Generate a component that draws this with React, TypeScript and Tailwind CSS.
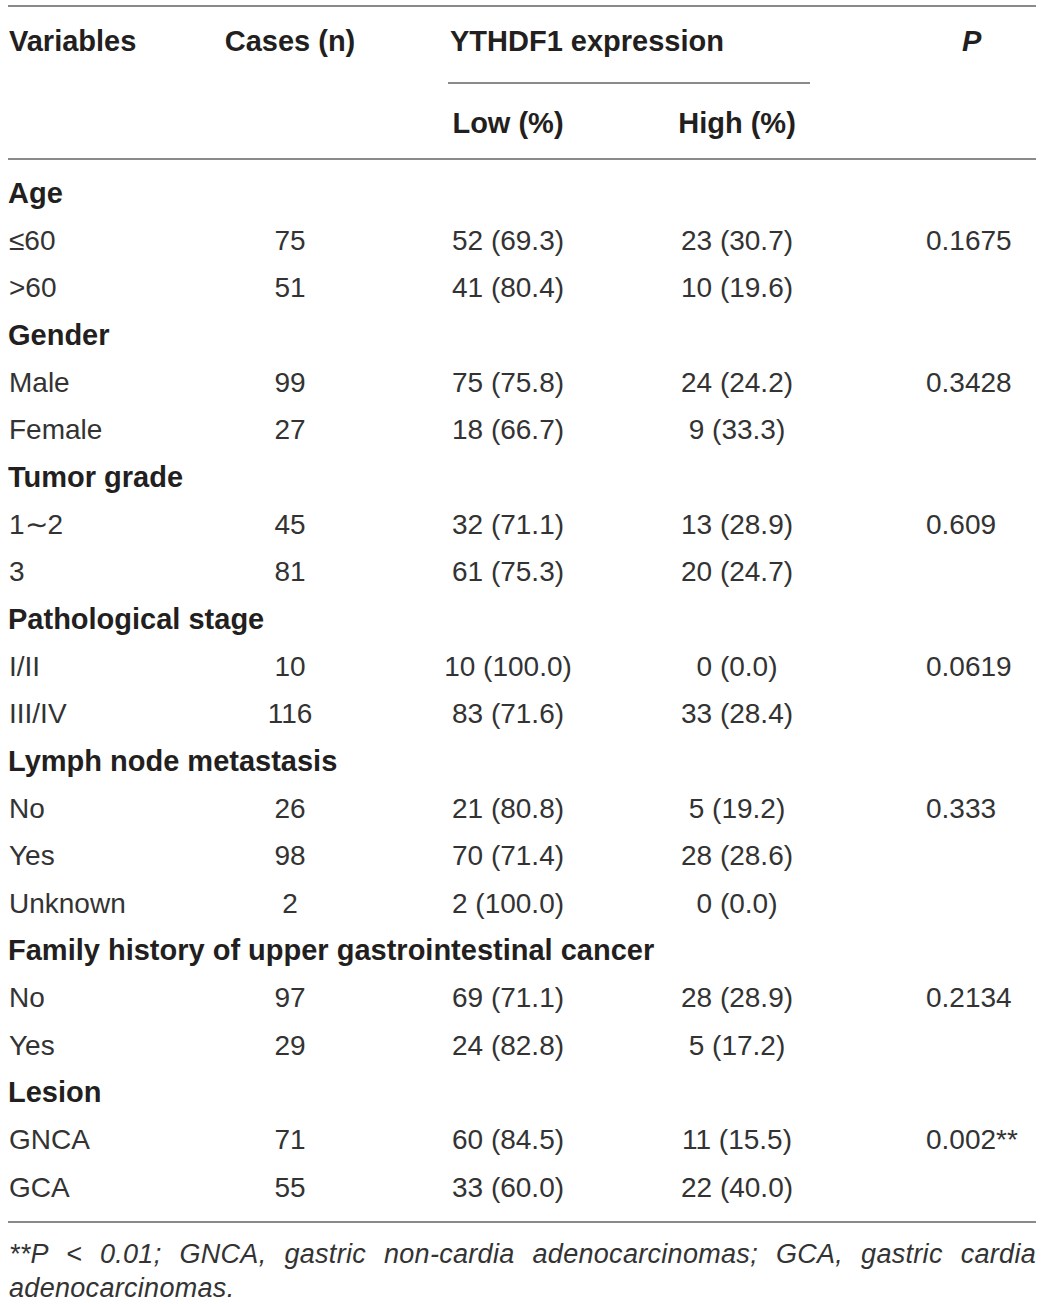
const rows: { section?: string; cells?: [string, string, string, string, string] }[] = [
  { section: 'Age' },
  { cells: ['≤60', '75', '52 (69.3)', '23 (30.7)', '0.1675'] },
  { cells: ['>60', '51', '41 (80.4)', '10 (19.6)', ''] },
  { section: 'Gender' },
  { cells: ['Male', '99', '75 (75.8)', '24 (24.2)', '0.3428'] },
  { cells: ['Female', '27', '18 (66.7)', '9 (33.3)', ''] },
  { section: 'Tumor grade' },
  { cells: ['1∼2', '45', '32 (71.1)', '13 (28.9)', '0.609'] },
  { cells: ['3', '81', '61 (75.3)', '20 (24.7)', ''] },
  { section: 'Pathological stage' },
  { cells: ['I/II', '10', '10 (100.0)', '0 (0.0)', '0.0619'] },
  { cells: ['III/IV', '116', '83 (71.6)', '33 (28.4)', ''] },
  { section: 'Lymph node metastasis' },
  { cells: ['No', '26', '21 (80.8)', '5 (19.2)', '0.333'] },
  { cells: ['Yes', '98', '70 (71.4)', '28 (28.6)', ''] },
  { cells: ['Unknown', '2', '2 (100.0)', '0 (0.0)', ''] },
  { section: 'Family history of upper gastrointestinal cancer' },
  { cells: ['No', '97', '69 (71.1)', '28 (28.9)', '0.2134'] },
  { cells: ['Yes', '29', '24 (82.8)', '5 (17.2)', ''] },
  { section: 'Lesion' },
  { cells: ['GNCA', '71', '60 (84.5)', '11 (15.5)', '0.002**'] },
  { cells: ['GCA', '55', '33 (60.0)', '22 (40.0)', ''] },
];

const Rule = () => <div className="h-[2px] bg-[#8a8a8a]" />;

export default function App() {
  return (
    <div className="min-h-[1304px] bg-white pt-[5px] font-['Liberation_Sans',Arial,sans-serif]">
      <div className="ml-[8px] w-[1028px]">
        <Rule />

        {/* header */}
        <div className="flex h-[151px] text-[29px] font-bold text-[#231f20]">
          <div className="flex h-[70px] w-[192px] items-center pl-[1px]">Variables</div>
          <div className="flex h-[70px] w-[180px] items-center justify-center">Cases (n)</div>
          <div className="flex w-[458px] flex-col">
            <div className="flex h-[70px] items-center pl-[70px]">YTHDF1 expression</div>
            <div className="ml-[68px] mr-[28px] mt-[5px] h-[2px] bg-[#8a8a8a]" />
            <div className="flex h-[74px] items-center pt-[6px]">
              <div className="w-[256px] text-center">Low (%)</div>
              <div className="w-[202px] text-center">High (%)</div>
            </div>
          </div>
          <div className="flex h-[70px] w-[198px] items-center pl-[124px] italic">P</div>
        </div>

        <Rule />

        {/* body */}
        <div className="py-[10px]">
          {rows.map((r, i) =>
            r.section ? (
              <div key={i} className="flex h-[47.33px] items-center text-[29px] font-bold text-[#231f20]">
                {r.section}
              </div>
            ) : (
              <div key={i} className="flex h-[47.33px] items-center text-[28px] text-[#333333]">
                <div className="w-[192px] pl-[1px]">{r.cells![0]}</div>
                <div className="w-[180px] text-center">{r.cells![1]}</div>
                <div className="w-[256px] text-center">{r.cells![2]}</div>
                <div className="w-[202px] text-center">{r.cells![3]}</div>
                <div className="w-[198px] pl-[88px]">{r.cells![4]}</div>
              </div>
            )
          )}
        </div>

        <Rule />

        <p className="pt-[14px] pl-[1px] text-justify text-[27px] leading-[34px] italic tracking-[0.3px] text-[#333333]">
          **P &lt; 0.01; GNCA, gastric non-cardia adenocarcinomas; GCA, gastric cardia adenocarcinomas.
        </p>
      </div>
    </div>
  );
}
